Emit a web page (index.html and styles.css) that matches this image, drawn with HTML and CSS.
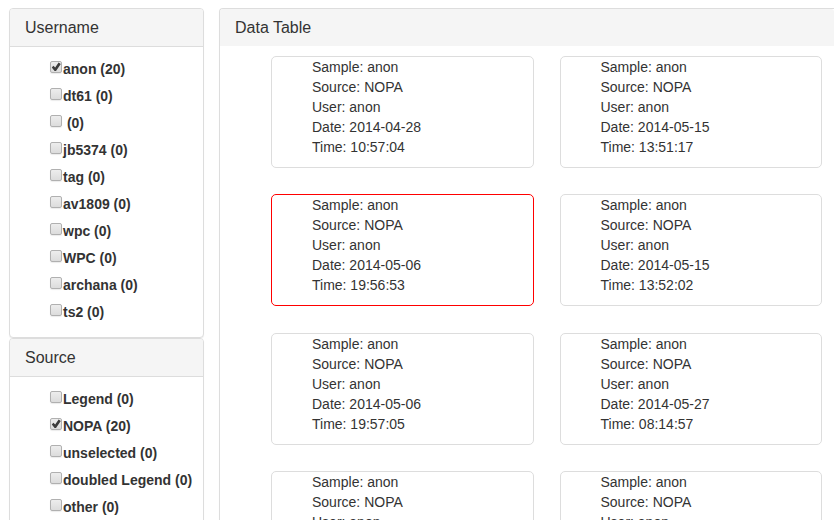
FILE: index.html
```html
<!DOCTYPE html>
<html lang="en">
<head>
<meta charset="utf-8">
<title>Data Table</title>
<link rel="stylesheet" href="styles.css">
</head>
<body>
<div class="layout">
  <aside class="sidebar">
    <section class="panel">
      <h2 class="panel-heading">Username</h2>
      <ul class="filters">
        <li><label><input type="checkbox" checked>anon (20)</label></li>
        <li><label><input type="checkbox">dt61 (0)</label></li>
        <li><label><input type="checkbox">&nbsp;(0)</label></li>
        <li><label><input type="checkbox">jb5374 (0)</label></li>
        <li><label><input type="checkbox">tag (0)</label></li>
        <li><label><input type="checkbox">av1809 (0)</label></li>
        <li><label><input type="checkbox">wpc (0)</label></li>
        <li><label><input type="checkbox">WPC (0)</label></li>
        <li><label><input type="checkbox">archana (0)</label></li>
        <li><label><input type="checkbox">ts2 (0)</label></li>
      </ul>
    </section>
    <section class="panel">
      <h2 class="panel-heading">Source</h2>
      <ul class="filters">
        <li><label><input type="checkbox">Legend (0)</label></li>
        <li><label><input type="checkbox" checked>NOPA (20)</label></li>
        <li><label><input type="checkbox">unselected (0)</label></li>
        <li><label><input type="checkbox">doubled Legend (0)</label></li>
        <li><label><input type="checkbox">other (0)</label></li>
      </ul>
    </section>
  </aside>
  <main class="panel data">
    <h2 class="panel-heading">Data Table</h2>
    <div class="cards">
      <ul class="card"><li>Sample: anon</li><li>Source: NOPA</li><li>User: anon</li><li>Date: 2014-04-28</li><li>Time: 10:57:04</li></ul>
      <ul class="card"><li>Sample: anon</li><li>Source: NOPA</li><li>User: anon</li><li>Date: 2014-05-15</li><li>Time: 13:51:17</li></ul>
      <ul class="card selected"><li>Sample: anon</li><li>Source: NOPA</li><li>User: anon</li><li>Date: 2014-05-06</li><li>Time: 19:56:53</li></ul>
      <ul class="card"><li>Sample: anon</li><li>Source: NOPA</li><li>User: anon</li><li>Date: 2014-05-15</li><li>Time: 13:52:02</li></ul>
      <ul class="card"><li>Sample: anon</li><li>Source: NOPA</li><li>User: anon</li><li>Date: 2014-05-06</li><li>Time: 19:57:05</li></ul>
      <ul class="card"><li>Sample: anon</li><li>Source: NOPA</li><li>User: anon</li><li>Date: 2014-05-27</li><li>Time: 08:14:57</li></ul>
      <ul class="card"><li>Sample: anon</li><li>Source: NOPA</li><li>User: anon</li></ul>
      <ul class="card"><li>Sample: anon</li><li>Source: NOPA</li><li>User: anon</li></ul>
    </div>
  </main>
</div>
</body>
</html>
```
FILE: styles.css
```css
* {
  box-sizing: border-box;
}

body {
  margin: 0;
  padding: 8px 0 0 9px;
  background: #fff;
  color: #333;
  font: 14px/20px "Liberation Sans", Arial, sans-serif;
}

ul {
  margin: 0;
  padding: 0;
  list-style: none;
}

.layout {
  display: flex;
  gap: 15px;
}

.sidebar {
  flex: 0 0 195px;
}

.panel {
  border: 1px solid #ddd;
  border-radius: 4px;
  background: #fff;
  box-shadow: 0 1px 1px rgba(0, 0, 0, 0.05);
}

.panel-heading {
  margin: 0;
  padding: 10px 15px;
  border-bottom: 1px solid #ddd;
  border-radius: 3px 3px 0 0;
  background: #f5f5f5;
  font-size: 16px;
  font-weight: 400;
  line-height: 17px;
}

.filters {
  display: flex;
  flex-direction: column;
  gap: 7px;
  padding: 12px 0 15px 40px;
  font-weight: 700;
  white-space: nowrap;
}

.filters label {
  display: flex;
  align-items: flex-start;
}

.filters input {
  appearance: none;
  width: 12px;
  height: 12px;
  margin: 2px 1px 0 0;
  border: 1px solid #b0b0b0;
  border-radius: 2px;
  background: linear-gradient(#ededed, #dcdcdc);
  box-shadow: 0 1px 1px rgba(0, 0, 0, 0.08);
}

.filters input:checked::before {
  content: "";
  display: block;
  width: 10px;
  height: 10px;
  background: #3c3c3c;
  clip-path: polygon(8% 56%, 24% 38%, 42% 54%, 76% 6%, 98% 20%, 50% 90%, 36% 90%);
}

.data {
  flex: 1;
  min-width: 0;
  border-right: 0;
  border-radius: 4px 0 0 0;
}

.data .panel-heading {
  border-bottom: 0;
}

.cards {
  display: grid;
  grid-template-columns: 1fr 1fr;
  column-gap: 26px;
  padding: 10px 12px 0 51px;
}

.card {
  min-height: 112px;
  margin-bottom: 10%;
  padding: 0 40px 10px;
  border: 1px solid #ddd;
  border-radius: 5px;
}

.card.selected {
  border-color: #f00;
}
```
